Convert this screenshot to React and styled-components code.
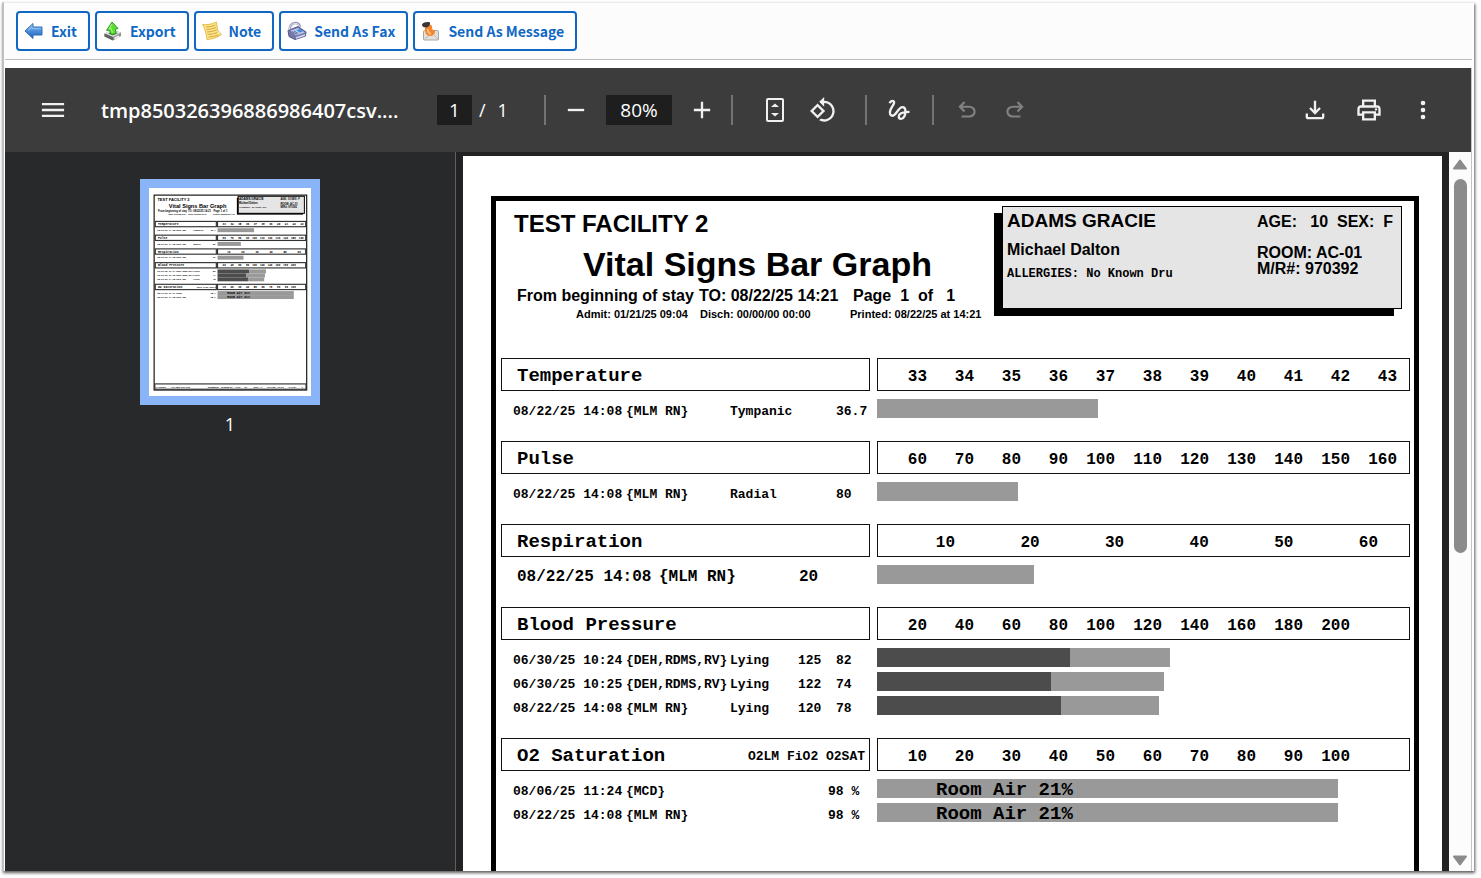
import React, { useState } from 'react';
import styled, { createGlobalStyle } from 'styled-components';

const sans = '"Liberation Sans", Arial, sans-serif';
const mono = '"Liberation Mono", "Courier New", monospace';
const ui = '"Open Sans", "Noto Sans", sans-serif';

const GlobalStyle = createGlobalStyle`
  * {
    box-sizing: border-box;
  }
  body {
    margin: 0;
    background: #fff;
    overflow: hidden;
  }
`;

// App window
const Window = styled.div`
  display: flex;
  flex-direction: column;
  height: calc(100vh - 9px);
  margin: 2px 7px 7px 2px;
  padding: 0 2px 0 1px;
  border-left: 2px solid #bfbfbf;
  border-top: 1px solid #ececec;
  background: #fff;
  box-shadow: 1px 2px 3px rgba(0, 0, 0, 0.65);
`;

const ActionBar = styled.nav`
  display: flex;
  gap: 5px;
  padding: 8px 11px;
  margin-bottom: 8px;
  border-bottom: 1px solid #bdbdbd;
  background: #fcfcfc;
`;

const ActionButton = styled.button`
  display: flex;
  align-items: center;
  gap: 7px;
  height: 40px;
  padding: 0 11px 0 6px;
  border: 2px solid #1068c4;
  border-radius: 4px;
  background: #fff;
  color: #1068c4;
  font: 700 14px "Noto Sans CJK JP", "Noto Sans", sans-serif;
  white-space: nowrap;
  cursor: pointer;
`;

// PDF viewer
const Viewer = styled.section`
  display: flex;
  flex-direction: column;
  flex: 1;
  min-height: 0;
  border-right: 1px solid #c4c4c4;
`;

const PdfBar = styled.header`
  display: flex;
  align-items: center;
  flex: none;
  height: 84px;
  padding: 0 21px 0 24px;
  background: #3c3c3c;
  color: #fff;
  font: 400 18px ${ui};
`;

const FileName = styled.h1`
  width: 360px;
  margin: 0;
  padding-left: 24px;
  font: 600 20px ${ui};
  white-space: nowrap;
`;

const BarInput = styled.input`
  width: ${(p) => p.$width}px;
  height: 30px;
  padding: 0;
  border: 0;
  background: #1e1e1e;
  color: #fff;
  font: 400 19px ${ui};
  text-align: center;
`;

const PageTotal = styled.span`
  display: flex;
  gap: 12px;
  width: 72px;
  padding-left: 7px;
`;

const Separator = styled.span`
  width: 2px;
  height: 30px;
  margin: 0 ${(p) => p.$right}px 0 ${(p) => p.$left}px;
  background: #737373;
`;

const IconButton = styled.button`
  display: flex;
  align-items: center;
  justify-content: center;
  width: ${(p) => p.$width || 48}px;
  height: 48px;
  padding: 0;
  border: 0;
  background: none;
  color: #f1f1f1;
  cursor: pointer;

  &:disabled {
    color: #818181;
    cursor: default;
  }
`;

const ZoomGroup = styled.div`
  display: flex;
  align-items: center;
  gap: 6px;
`;

const Spacer = styled.div`
  flex: 1;
`;

const PdfBody = styled.div`
  display: flex;
  flex: 1;
  min-height: 0;
`;

const Sidebar = styled.aside`
  display: flex;
  flex-direction: column;
  align-items: center;
  gap: 6px;
  flex: none;
  width: 451px;
  padding-top: 27px;
  border-right: 1px solid #5f5f5f;
  background: #28292a;
  color: #fff;
  font: 400 18px/26px ${ui};
`;

const ThumbButton = styled.button`
  width: 180px;
  padding: 0;
  border: 9px solid #8ab4f8;
  background: #fff;
  cursor: pointer;

  svg {
    display: block;
    width: 100%;
  }
`;

const Canvas = styled.main`
  flex: 1;
  padding: 4px 7px 0;
  background: #222;
  overflow: hidden;
`;

const ScrollBar = styled.div`
  display: flex;
  flex-direction: column;
  align-items: center;
  flex: none;
  width: 22px;
  padding: 7px 0 5px;
  background: #fcfcfc;
`;

const ScrollThumb = styled.div`
  width: 13px;
  height: 374px;
  margin: 9px 0 auto;
  border-radius: 7px;
  background: #8b8b8b;
`;

// Report page
const Page = styled.article`
  height: 1257px;
  padding: 40px 23px 35px 28px;
  background: #fff;
  color: #000;
`;

const Frame = styled.div`
  height: 100%;
  padding: 5px 4px 0 5px;
  border: 5px solid #000;
`;

const ReportHeader = styled.header`
  display: flex;
  justify-content: space-between;
  min-height: 152px;
  padding-right: 8px;
  font: bold 16px ${sans};
  white-space: pre;
`;

const Titles = styled.div`
  padding-left: 13px;
`;

const Facility = styled.div`
  font-size: 24px;
  line-height: 36px;
`;

const ReportTitle = styled.h2`
  margin: 0;
  padding-left: 69px;
  font-size: 34px;
  line-height: 45px;
`;

const Range = styled.div`
  display: grid;
  grid-template-columns: 182px 154px auto;
  padding-left: 3px;
  line-height: 18px;
`;

const Dates = styled.div`
  display: grid;
  grid-template-columns: 124px 150px auto;
  padding-left: 62px;
  font-size: 11px;
  line-height: 18px;
`;

const PatientCard = styled.div`
  display: flex;
  width: 400px;
  height: 103px;
  padding-left: 4px;
  border: 1px solid #000;
  background: #e5e5e5;
  box-shadow: -8px 7px 0 #000;
`;

const PatientMain = styled.div`
  flex: 1;
`;

const PatientName = styled.div`
  font-size: 19px;
  line-height: 28px;
`;

const Doctor = styled.div`
  line-height: 30px;
`;

const Allergies = styled.div`
  font: bold 12px/18px ${mono};
`;

const PatientFacts = styled.div`
  width: 144px;
  line-height: 16px;
`;

const AgeSex = styled.div`
  margin-bottom: 8px;
  line-height: 30px;
`;

const Chart = styled.table`
  display: block;
  margin-bottom: 18px;
  font-family: ${mono};
  font-weight: bold;

  thead,
  tbody {
    display: block;
  }
`;

const HeadRow = styled.tr`
  display: grid;
  grid-template-columns: 369fr 533fr;
  gap: 7px;
  margin-bottom: 8px;
`;

const HeadCell = styled.th`
  display: flex;
  justify-content: space-between;
  height: 33px;
  padding: 2px 4px 0 15px;
  border: 1px solid #111;
  font-size: 19px;
  line-height: 31px;
`;

const HeadNote = styled.span`
  font-size: 13px;
`;

const Scale = styled.th`
  display: grid;
  grid-template-columns: ${(p) => p.$first}px repeat(${(p) => p.$steps}, 1fr);
  height: 33px;
  padding: 3px ${(p) => p.$end}px 0 0;
  border: 1px solid #111;
  font-size: 16px;
  line-height: 31px;
  text-align: right;
`;

const Row = styled.tr`
  display: grid;
  grid-template-columns: ${(p) => p.$columns} 533fr;
  height: 24px;
  padding-left: ${(p) => (p.$large ? 16 : 12)}px;
  font-size: ${(p) => (p.$large ? 16 : 13)}px;
  line-height: ${(p) => (p.$large ? 24 : 26)}px;
`;

const Cell = styled.td`
  min-width: 0;
  padding: 0;
  white-space: pre;
`;

const BarTrack = styled.td`
  display: flex;
  height: 19px;
  padding: 0;
`;

const Bar = styled.div`
  height: 19px;
  padding-left: ${(p) => (p.$dark ? 0 : p.$pad)}px;
  background: ${(p) => (p.$dark ? '#4c4c4c' : '#999')};
  font-size: 19px;
  line-height: 22px;
  white-space: nowrap;
`;

const PLOT = 533;

// bars are lengths along the plot: [dark part, light part]
const charts = [
  {
    title: 'Temperature',
    ticks: [33, 34, 35, 36, 37, 38, 39, 40, 41, 42, 43],
    columns: '113fr 104fr 106fr 41fr',
    rows: [{ cells: ['08/22/25 14:08', '{MLM RN}', 'Tympanic', '36.7'], bars: [0, 221] }],
  },
  {
    title: 'Pulse',
    ticks: [60, 70, 80, 90, 100, 110, 120, 130, 140, 150, 160],
    columns: '113fr 104fr 106fr 41fr',
    rows: [{ cells: ['08/22/25 14:08', '{MLM RN}', 'Radial', '80'], bars: [0, 141] }],
  },
  {
    title: 'Respiration',
    wide: true,
    large: true,
    ticks: [10, 20, 30, 40, 50, 60],
    columns: '142fr 140fr 78fr',
    rows: [{ cells: ['08/22/25 14:08', '{MLM RN}', '20'], bars: [0, 157] }],
  },
  {
    title: 'Blood Pressure',
    ticks: [20, 40, 60, 80, 100, 120, 140, 160, 180, 200],
    columns: '113fr 104fr 68fr 38fr 41fr',
    rows: [
      { cells: ['06/30/25 10:24', '{DEH,RDMS,RV}', 'Lying', '125', '82'], bars: [193, 100] },
      { cells: ['06/30/25 10:25', '{DEH,RDMS,RV}', 'Lying', '122', '74'], bars: [174, 113] },
      { cells: ['08/22/25 14:08', '{MLM RN}', 'Lying', '120', '78'], bars: [184, 98] },
    ],
  },
  {
    title: 'O2 Saturation',
    note: 'O2LM FiO2 O2SAT',
    ticks: [10, 20, 30, 40, 50, 60, 70, 80, 90, 100],
    columns: '113fr 202fr 49fr',
    rows: [
      { cells: ['08/06/25 11:24', '{MCD}', '98 %'], bars: [0, 461], label: 'Room Air 21%' },
      { cells: ['08/22/25 14:08', '{MLM RN}', '98 %'], bars: [0, 461], label: 'Room Air 21%' },
    ],
  },
];

const VitalChart = ({ chart }) => (
  <Chart>
    <thead>
      <HeadRow>
        <HeadCell>
          {chart.title}
          {chart.note && <HeadNote>{chart.note}</HeadNote>}
        </HeadCell>
        <Scale
          $first={chart.wide ? 77 : 49}
          $steps={chart.wide ? 5 : 10}
          $end={chart.wide ? 31 : 12}
        >
          {chart.ticks.map((tick) => (
            <span key={tick}>{tick}</span>
          ))}
        </Scale>
      </HeadRow>
    </thead>
    <tbody>
      {chart.rows.map((row, i) => (
        <Row key={i} $columns={chart.columns} $large={chart.large}>
          {row.cells.map((cell, j) => (
            <Cell key={j}>{cell}</Cell>
          ))}
          <BarTrack>
            {row.bars[0] > 0 && <Bar $dark style={{ width: `${(row.bars[0] / PLOT) * 100}%` }} />}
            <Bar $pad={row.label ? 59 : 0} style={{ width: `${(row.bars[1] / PLOT) * 100}%` }}>
              {row.label}
            </Bar>
          </BarTrack>
        </Row>
      ))}
    </tbody>
  </Chart>
);

const thumbTops = [202, 285, 368, 451, 582];

const footer = [
  [40, 'PATIENT:'],
  [132, 'ADAMS GRACIE'],
  [355, 'NUMBER:'],
  [435, '970392.01'],
  [518, 'AGE:'],
  [575, '10'],
  [632, 'SEX:'],
  [675, 'F'],
  [715, 'ROOM:'],
  [772, 'AC-01'],
  [845, 'PAGE:'],
  [922, '1'],
];

// Small drawing of the whole page, in page units
const Thumbnail = () => (
  <svg viewBox="0 0 979 1257" fontFamily={sans} fontWeight="bold" aria-hidden="true">
    <rect x="31" y="43" width="922" height="1178" fill="none" stroke="#111" strokeWidth="7" />
    <text x="51" y="76" fontSize="24">TEST FACILITY 2</text>
    <text x="120" y="122" fontSize="34">Vital Signs Bar Graph</text>
    <g fontSize="16">
      <text x="54" y="145">From beginning of stay</text>
      <text x="236" y="145">TO: 08/22/25 14:21</text>
      <text x="390" y="145">Page 1 of 1</text>
    </g>
    <g fontSize="11">
      <text x="113" y="162">Admit: 01/21/25 09:04</text>
      <text x="237" y="162">Disch: 00/00/00 00:00</text>
      <text x="387" y="162">Printed: 08/22/25 at 14:21</text>
    </g>
    <rect x="531" y="58" width="400" height="103" fill="#000" />
    <rect x="539" y="50" width="400" height="103" fill="#e5e5e5" stroke="#000" strokeWidth="6" />
    <text x="544" y="71" fontSize="19">ADAMS GRACIE</text>
    <text x="544" y="99" fontSize="16">Michael Dalton</text>
    <text x="544" y="121" fontSize="12" fontFamily={mono}>ALLERGIES: No Known Dru</text>
    <g fontSize="16">
      <text x="794" y="71">AGE: 10 SEX: F</text>
      <text x="794" y="102">ROOM: AC-01</text>
      <text x="794" y="118">M/R#: 970392</text>
    </g>
    {charts.map((chart, i) => {
      const top = thumbTops[i];
      return (
        <g key={chart.title} fontFamily={mono}>
          <rect x="38" y={top} width="369" height="32" fill="none" stroke="#333" strokeWidth="7" />
          <rect x="414" y={top} width="533" height="32" fill="none" stroke="#333" strokeWidth="7" />
          <text x="54" y={top + 23} fontSize="19">{chart.title}</text>
          {chart.note && <text x="288" y={top + 23} fontSize="13">{chart.note}</text>}
          {chart.ticks.map((tick, j) => (
            <text
              key={tick}
              x={chart.wide ? 492 + j * 85 : 464 + j * 47}
              y={top + 23}
              fontSize="16"
              textAnchor="end"
            >
              {tick}
            </text>
          ))}
          {chart.rows.map((row, j) => {
            const y = top + 41 + j * 24;
            return (
              <g key={j} fontSize="13">
                <text x="50" y={y + 17}>{row.cells[0]}</text>
                <text x="163" y={y + 17}>{row.cells[1]}</text>
                {row.cells.length > 3 && <text x="267" y={y + 17}>{row.cells[2]}</text>}
                <text x="402" y={y + 17} textAnchor="end">{row.cells[row.cells.length - 1]}</text>
                <rect x="414" y={y} width={row.bars[0]} height="24" fill="#4c4c4c" />
                <rect x={414 + row.bars[0]} y={y} width={row.bars[1]} height="24" fill="#999" />
                {row.label && <text x="473" y={y + 17} fontSize="19">{row.label}</text>}
              </g>
            );
          })}
        </g>
      );
    })}
    <rect x="35" y="1184" width="914" height="32" fill="none" stroke="#333" strokeWidth="7" />
    {footer.map(([x, text]) => (
      <text key={x} x={x} y="1206" fontSize="15">{text}</text>
    ))}
  </svg>
);

// Icons
const Icon = ({ d, size = 28, children }) => (
  <svg width={size} height={size} viewBox="0 0 24 24" fill="currentColor" aria-hidden="true">
    {d && <path d={d} />}
    {children}
  </svg>
);

const paths = {
  rotate:
    'M7.34 6.41L.86 12.9l6.49 6.48 6.49-6.48-6.5-6.49zM3.69 12.9l3.66-3.66L11 12.9l-3.66 3.66-3.65-3.66zm15.67-6.26C17.61 4.88 15.3 4 13 4V.76L8.76 5 13 9.24V6c1.79 0 3.58.68 4.95 2.05 2.73 2.73 2.73 7.17 0 9.9C16.58 19.32 14.79 20 13 20c-.97 0-1.94-.21-2.84-.61l-1.49 1.49C10.02 21.62 11.51 22 13 22c2.3 0 4.61-.88 6.36-2.64 3.52-3.51 3.52-9.21 0-12.72z',
  undo:
    'M7 19v-2h7.1q1.575 0 2.7375-1T18 13.5 16.8375 11 14.1 10H7.8l2.6 2.6L9 14 4 9l5-5 1.4 1.4L7.8 8h6.3q2.425 0 4.1625 1.575T20 13.5t-1.7375 3.925T14.1 19z',
  download:
    'M12 16l-5-5 1.4-1.45 2.6 2.6V4h2v8.15l2.6-2.6L17 11zM6 20q-.825 0-1.4125-.5875T4 18v-3h2v3h12v-3h2v3q0 .825-.5875 1.4125T18 20z',
  print:
    'M19 8h-1V3H6v5H5c-1.66 0-3 1.34-3 3v6h4v4h12v-4h4v-6c0-1.66-1.34-3-3-3zM8 5h8v3H8V5zm8 12v2H8v-4h8v2zm2-2v-2H6v2H4v-4c0-.55.45-1 1-1h14c.55 0 1 .45 1 1v4h-2z',
};

const ExitIcon = () => (
  <svg width="20" height="20" viewBox="0 0 20 20" aria-hidden="true">
    <defs>
      <linearGradient id="exitFill" x1="0" y1="0" x2="0" y2="1">
        <stop offset="0" stopColor="#a9cdf3" />
        <stop offset="0.5" stopColor="#4c8fdc" />
        <stop offset="1" stopColor="#1c5fb8" />
      </linearGradient>
    </defs>
    <path d="M1 10l8-7.500V6h9v8H9v3.500z" fill="url(#exitFill)" stroke="#2f6fb8" strokeLinejoin="round" />
    <path d="M4 9.500L8 6v1.500h9" fill="none" stroke="#8fbdf0" />
  </svg>
);

const ExportIcon = () => (
  <svg width="20" height="20" viewBox="0 0 20 20" aria-hidden="true">
    <path d="M1.500 12.500l7-3.500 9.500 2.500v3.500l-8 4.500-8.500-4z" fill="#8b8f8c" />
    <path d="M1.500 12.500l7-3.500 9.500 2.500-8 4.500z" fill="#e3e5e3" />
    <path d="M1.500 12.500v3l8.500 4V16z" fill="#5f6462" />
    <path d="M5 12.500l4-2 6 1.500-5 2.500z" fill="#6d726e" />
    <path d="M11.500 17.500l4.500-2.500" stroke="#f3f3f3" strokeWidth="2" />
    <path d="M9 1l6 6.500-2.500.5.500 4.500-5 1-1.500-4.500-3 .5z" fill="#5fdc31" stroke="#27a01b" strokeLinejoin="round" />
    <path d="M9 3L6 8l2-.5 1.500 4" fill="none" stroke="#b4f78e" />
  </svg>
);

const NoteIcon = () => (
  <svg width="20" height="20" viewBox="0 0 20 20" aria-hidden="true">
    <path d="M.5 3.500c4 .5 9 0 14-2.500l1 8 4 4.500C15 17 10 18 5 18.500 4 12 3 7 .5 3.500z" fill="#fbe68a" stroke="#e6bd4b" />
    <path
      d="M4 6q5 0 9.500-2M4.500 8.500q5 0 9.500-2M5 11q5 0 9.500-2M5.500 13.500q5 0 10-2M6.500 16q5 0 10-2"
      fill="none"
      stroke="#d9a441"
    />
    <path d="M15 9l4.500 4.500-4-.5z" fill="#fff6c8" stroke="#e6bd4b" strokeWidth="0.500" />
  </svg>
);

const FaxIcon = () => (
  <svg width="20" height="20" viewBox="0 0 20 20" aria-hidden="true">
    <path d="M1 9.500L11 5.500l8 5.500-.5 4-10.500 3.500-6-3z" fill="#7478a8" stroke="#55588c" strokeLinejoin="round" />
    <path d="M3.500 9.500L11 7l7 4.500-9 3z" fill="#b9c9e8" />
    <path d="M9.500 9l3.500-1 3 2.500-3.500 1z" fill="#3f8be0" />
    <path d="M2.500 8.500c0-4 3-6.500 6-6.500 2.500 0 4 1.500 4.500 4" fill="none" stroke="#9a9cba" strokeWidth="2.500" />
    <path d="M2.500 8c0-3.500 3-5.500 6-5.500 2 0 3.500 1 4 3" fill="none" stroke="#e8e9f3" />
    <path d="M5 10.500l5 3M7 10l4 2.500" stroke="#686c9c" />
    <path d="M9 17l9-3" stroke="#d9dcf0" strokeWidth="1.500" />
  </svg>
);

const MessageIcon = () => (
  <svg width="20" height="20" viewBox="0 0 20 20" aria-hidden="true">
    <rect x="2.500" y="9.500" width="15" height="9.500" rx="1" fill="#e2e0de" stroke="#aaa6a3" />
    <path d="M3.500 18l5-4M17 18l-4-4" stroke="#bcb8b5" />
    <path d="M4 7l4.500-3.500c3 .5 3 2.500 2.500 4.500l3 2c0 3-2 5-5 5-4-.5-5.500-3.500-5-8z" fill="#f6862c" />
    <path d="M1 3.500C2.500 1 7 .5 9 1.500c.5 2.500-1 4-3.500 5C3 7 1 5.500 1 3.500z" fill="#3b3633" />
    <path d="M7 8c-.5 2 .5 4.500 3 5" fill="none" stroke="#ffc07a" strokeWidth="2" />
  </svg>
);

const actions = [
  { label: 'Exit', Glyph: ExitIcon },
  { label: 'Export', Glyph: ExportIcon },
  { label: 'Note', Glyph: NoteIcon },
  { label: 'Send As Fax', Glyph: FaxIcon },
  { label: 'Send As Message', Glyph: MessageIcon },
];

const PdfToolbar = () => {
  const [page, setPage] = useState('1');
  const [zoom, setZoom] = useState('80%');

  return (
    <PdfBar>
      <IconButton aria-label="Menu">
        <Icon>
          <path d="M2.500 6h19v2h-19zM2.500 11h19v2h-19zM2.500 16h19v2h-19z" />
        </Icon>
      </IconButton>
      <FileName>tmp850326396886986407csv....</FileName>
      <BarInput $width={35} aria-label="Page number" value={page} onChange={(e) => setPage(e.target.value)} />
      <PageTotal>
        <span>/</span>
        <span>1</span>
      </PageTotal>
      <Separator $left={0} $right={6} />
      <ZoomGroup>
        <IconButton aria-label="Zoom out">
          <Icon d="M5 11h14v2H5z" />
        </IconButton>
        <BarInput $width={66} aria-label="Zoom level" value={zoom} onChange={(e) => setZoom(e.target.value)} />
        <IconButton aria-label="Zoom in">
          <Icon d="M5 11h6V5h2v6h6v2h-6v6h-2v-6H5z" />
        </IconButton>
      </ZoomGroup>
      <Separator $left={5} $right={18} />
      <IconButton aria-label="Fit to page">
        <svg width="28" height="28" viewBox="0 0 28 28" aria-hidden="true">
          <rect x="6" y="3" width="16" height="22" rx="1" fill="none" stroke="currentColor" strokeWidth="2" />
          <path d="M14 7.500l4 3.500h-8zM14 20.500L10 17h8z" fill="currentColor" />
        </svg>
      </IconButton>
      <IconButton aria-label="Rotate counterclockwise">
        <Icon d={paths.rotate} />
      </IconButton>
      <Separator $left={18} $right={8} />
      <IconButton aria-label="Draw">
        <Icon>
          <path
            d="M3.700 6C4.600 5 5.500 4.200 6.500 4.200c1.300 0 1.700 1.300.9 2.800C6.300 9 4.200 11.500 4.200 14.200c0 2.300 1.700 3.300 3.400 2.300 2.400-1.300 4.400-7 7.200-7 2 0 2.700 1.800 2.700 3.700 0 3.400-1.600 6.400-3.700 6.400-1.300 0-2-.9-2-2 0-2.200 2.900-4 9.200-4"
            fill="none"
            stroke="currentColor"
            strokeWidth="2"
          />
        </Icon>
      </IconButton>
      <Separator $left={9} $right={9} />
      <IconButton aria-label="Undo" disabled>
        <Icon size={26} d={paths.undo} />
      </IconButton>
      <IconButton aria-label="Redo" disabled>
        <Icon size={26}>
          <path d={paths.undo} transform="matrix(-1 0 0 1 24 0)" />
        </Icon>
      </IconButton>
      <Spacer />
      <IconButton $width={54} aria-label="Download">
        <Icon d={paths.download} />
      </IconButton>
      <IconButton $width={54} aria-label="Print">
        <Icon d={paths.print}>
          <circle cx="18" cy="11.500" r="1" />
        </Icon>
      </IconButton>
      <IconButton $width={54} aria-label="More actions">
        <Icon>
          <circle cx="12" cy="6" r="2" />
          <circle cx="12" cy="12" r="2" />
          <circle cx="12" cy="18" r="2" />
        </Icon>
      </IconButton>
    </PdfBar>
  );
};

const Report = () => (
  <Page>
    <Frame>
      <ReportHeader>
        <Titles>
          <Facility>TEST FACILITY 2</Facility>
          <ReportTitle>Vital Signs Bar Graph</ReportTitle>
          <Range>
            <span>From beginning of stay</span>
            <span>TO: 08/22/25 14:21</span>
            <span>{'Page  1  of   1'}</span>
          </Range>
          <Dates>
            <span>Admit: 01/21/25 09:04</span>
            <span>Disch: 00/00/00 00:00</span>
            <span>Printed: 08/22/25 at 14:21</span>
          </Dates>
        </Titles>
        <PatientCard>
          <PatientMain>
            <PatientName>ADAMS GRACIE</PatientName>
            <Doctor>Michael Dalton</Doctor>
            <Allergies>ALLERGIES: No Known Dru</Allergies>
          </PatientMain>
          <PatientFacts>
            <AgeSex>{'AGE:   10  SEX:  F'}</AgeSex>
            <div>ROOM: AC-01</div>
            <div>M/R#: 970392</div>
          </PatientFacts>
        </PatientCard>
      </ReportHeader>
      {charts.map((chart) => (
        <VitalChart key={chart.title} chart={chart} />
      ))}
    </Frame>
  </Page>
);

const App = () => (
  <>
    <GlobalStyle />
    <Window>
      <ActionBar>
        {actions.map(({ label, Glyph }) => (
          <ActionButton key={label} type="button">
            <Glyph />
            {label}
          </ActionButton>
        ))}
      </ActionBar>
      <Viewer>
        <PdfToolbar />
        <PdfBody>
          <Sidebar>
            <ThumbButton aria-label="Page 1">
              <Thumbnail />
            </ThumbButton>
            <span>1</span>
          </Sidebar>
          <Canvas>
            <Report />
          </Canvas>
          <ScrollBar aria-hidden="true">
            <svg width="16" height="11" viewBox="0 0 16 11">
              <path d="M8 1.500L14 9.500H2z" fill="#8b8b8b" stroke="#8b8b8b" strokeWidth="2" strokeLinejoin="round" />
            </svg>
            <ScrollThumb />
            <svg width="16" height="11" viewBox="0 0 16 11">
              <path d="M8 9.500L2 1.500h12z" fill="#8b8b8b" stroke="#8b8b8b" strokeWidth="2" strokeLinejoin="round" />
            </svg>
          </ScrollBar>
        </PdfBody>
      </Viewer>
    </Window>
  </>
);

export default App;
